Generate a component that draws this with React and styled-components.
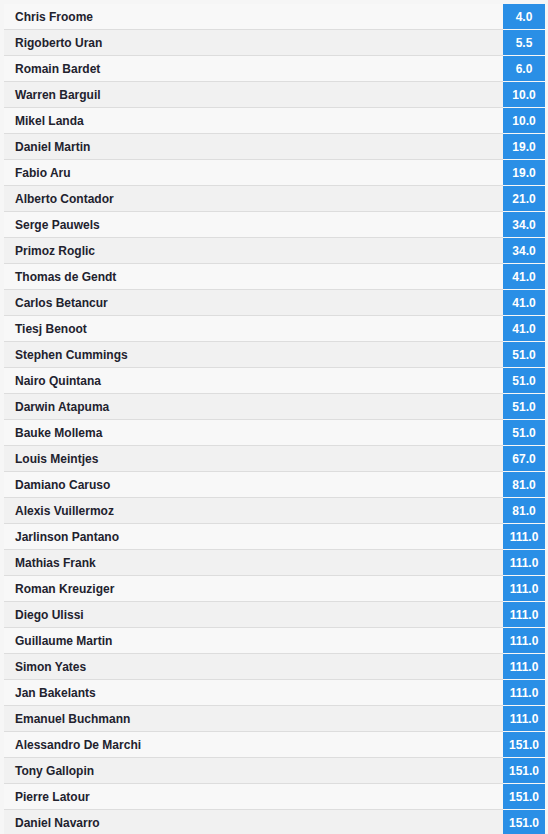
import React from 'react';
import styled, {createGlobalStyle} from 'styled-components';

const riders = [
  ['Chris Froome', '4.0'],
  ['Rigoberto Uran', '5.5'],
  ['Romain Bardet', '6.0'],
  ['Warren Barguil', '10.0'],
  ['Mikel Landa', '10.0'],
  ['Daniel Martin', '19.0'],
  ['Fabio Aru', '19.0'],
  ['Alberto Contador', '21.0'],
  ['Serge Pauwels', '34.0'],
  ['Primoz Roglic', '34.0'],
  ['Thomas de Gendt', '41.0'],
  ['Carlos Betancur', '41.0'],
  ['Tiesj Benoot', '41.0'],
  ['Stephen Cummings', '51.0'],
  ['Nairo Quintana', '51.0'],
  ['Darwin Atapuma', '51.0'],
  ['Bauke Mollema', '51.0'],
  ['Louis Meintjes', '67.0'],
  ['Damiano Caruso', '81.0'],
  ['Alexis Vuillermoz', '81.0'],
  ['Jarlinson Pantano', '111.0'],
  ['Mathias Frank', '111.0'],
  ['Roman Kreuziger', '111.0'],
  ['Diego Ulissi', '111.0'],
  ['Guillaume Martin', '111.0'],
  ['Simon Yates', '111.0'],
  ['Jan Bakelants', '111.0'],
  ['Emanuel Buchmann', '111.0'],
  ['Alessandro De Marchi', '151.0'],
  ['Tony Gallopin', '151.0'],
  ['Pierre Latour', '151.0'],
  ['Daniel Navarro', '151.0'],
];

const GlobalStyle = createGlobalStyle`
  body {
    margin: 0;
    background: #f6f6f6;
    font-family: "Liberation Sans", Arial, sans-serif;
  }
`;

const List = styled.div`
  padding: 4px 3px 0 4px;
`;

const Row = styled.div`
  display: flex;
  height: 26px;
`;

const Name = styled.div`
  flex: 1;
  box-sizing: border-box;
  height: 26px;
  padding: 1px 0 0 11px;
  line-height: 24px;
  font-size: 12px;
  font-weight: bold;
  color: #22222e;
  background: ${p => (p.$even ? '#f1f1f1' : '#f8f8f8')};
  border-bottom: 1px solid #dddddd;
`;

const Odds = styled.div`
  box-sizing: border-box;
  width: 42px;
  height: 25px;
  padding-top: 1px;
  line-height: 24px;
  text-align: center;
  background: #2a8fe6;
  color: #ffffff;
  font-size: 12px;
  font-weight: bold;
`;

export default function App() {
  return (
    <>
      <GlobalStyle />
      <List>
        {riders.map(([name, odds], i) => (
          <Row key={name}>
            <Name $even={i % 2 === 1}>{name}</Name>
            <Odds>{odds}</Odds>
          </Row>
        ))}
      </List>
    </>
  );
}
